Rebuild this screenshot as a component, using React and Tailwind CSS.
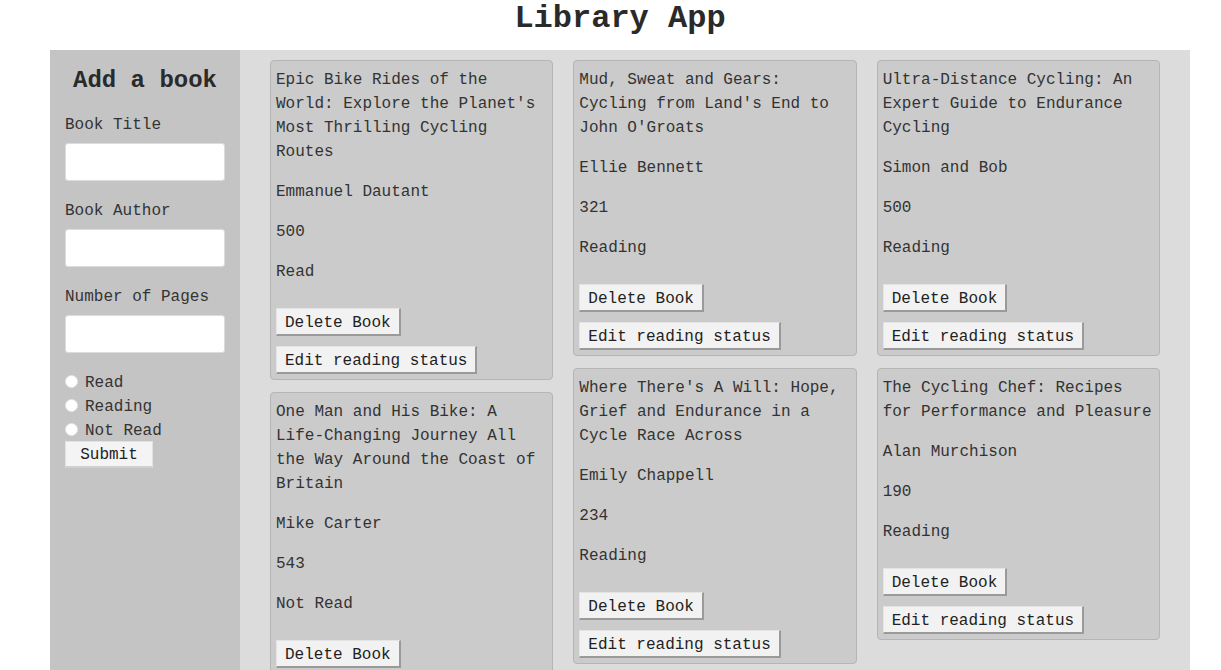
import React from "react";

const books = [
  [
    {
      title: "Epic Bike Rides of the World: Explore the Planet's Most Thrilling Cycling Routes",
      author: "Emmanuel Dautant",
      pages: 500,
      status: "Read",
    },
    {
      title: "One Man and His Bike: A Life-Changing Journey All the Way Around the Coast of Britain",
      author: "Mike Carter",
      pages: 543,
      status: "Not Read",
    },
  ],
  [
    {
      title: "Mud, Sweat and Gears: Cycling from Land's End to John O'Groats",
      author: "Ellie Bennett",
      pages: 321,
      status: "Reading",
    },
    {
      title: "Where There's A Will: Hope, Grief and Endurance in a Cycle Race Across",
      author: "Emily Chappell",
      pages: 234,
      status: "Reading",
    },
  ],
  [
    {
      title: "Ultra-Distance Cycling: An Expert Guide to Endurance Cycling",
      author: "Simon and Bob",
      pages: 500,
      status: "Reading",
    },
    {
      title: "The Cycling Chef: Recipes for Performance and Pleasure",
      author: "Alan Murchison",
      pages: 190,
      status: "Reading",
    },
  ],
];

const btn =
  "flex h-[28px] items-center self-start border-t border-l border-r-2 border-b-2 border-t-[#e4e4e4] border-l-[#e4e4e4] border-r-[#9a9a9a] border-b-[#9a9a9a] bg-[#f2f2f2] px-2 pt-[2px] text-base text-[#222]";

const BookCard = ({ book }) => (
  <div className="flex flex-col rounded-[4px] border border-[#b5b5b5] bg-[#cbcbcb] px-[5px] pt-[7px] pb-[5px]">
    <p className="m-0 leading-6">{book.title}</p>
    <p className="mt-4 leading-6">{book.author}</p>
    <p className="mt-4 leading-6">{book.pages}</p>
    <p className="mt-4 leading-6">{book.status}</p>
    <button type="button" className={`${btn} mt-[24px]`}>
      Delete Book
    </button>
    <button type="button" className={`${btn} mt-[10px]`}>
      Edit reading status
    </button>
  </div>
);

const Field = ({ label }) => (
  <>
    <label className="relative top-[2px] mt-4 block leading-6">{label}</label>
    <input
      type="text"
      className="mt-2 block h-[38px] w-[160px] rounded-[3px] border border-[#dcdcdc] bg-white"
    />
  </>
);

export default function App() {
  return (
    <div
      className="min-h-screen bg-white text-base text-[#333]"
      style={{ fontFamily: '"Liberation Mono", "DejaVu Sans Mono", monospace' }}
    >
      <div className="ml-[50px] w-[1140px]">
        <h1 className="h-[50px] pt-[2px] text-center text-[32px] font-bold leading-[34px] text-[#2a2a2a]">
          Library App
        </h1>
        <div className="flex">
          <aside className="w-[190px] shrink-0 bg-[#c4c4c4] px-[15px] pt-[17px] pb-10">
            <h2 className="text-center text-2xl font-bold leading-7 text-[#2a2a2a]">Add a book</h2>
            <div className="mt-[4px]">
              <Field label="Book Title" />
              <Field label="Book Author" />
              <Field label="Number of Pages" />
            </div>
            <div className="mt-4">
              {["Read", "Reading", "Not Read"].map((s) => (
                <label key={s} className="flex h-6 items-center">
                  <span className="mr-[7px] block h-[13px] w-[13px] rounded-full border border-[#e6e6e6] bg-white" />
                  <span className="relative top-[2px]">{s}</span>
                </label>
              ))}
            </div>
            <button
              type="button"
              className="flex h-[27px] w-[88px] items-center justify-center border border-b-2 border-[#e2e2e2] border-b-[#d0d0d0] bg-[#f4f4f4] pt-[2px] text-base text-[#222]"
            >
              Submit
            </button>
          </aside>
          <main className="flex flex-1 gap-5 bg-[#dcdcdc] px-[30px] pt-[10px] pb-10">
            {books.map((col, i) => (
              <div key={i} className="flex min-w-0 flex-1 flex-col gap-3">
                {col.map((b) => (
                  <BookCard key={b.title} book={b} />
                ))}
              </div>
            ))}
          </main>
        </div>
      </div>
    </div>
  );
}
